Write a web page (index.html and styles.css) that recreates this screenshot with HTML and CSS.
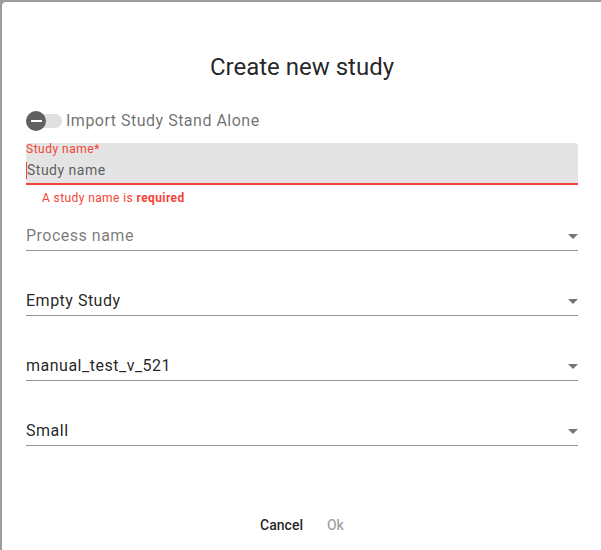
FILE: index.html
```html
<!DOCTYPE html>
<html>
<head>
<meta charset="utf-8">
<link rel="stylesheet" href="styles.css">
</head>
<body>
<div class="dialog">
  <h2 class="title">Create new study</h2>

  <label class="toggle">
    <span class="track"><span class="thumb"><span class="minus"></span></span></span>
    <span class="toggle-label">Import Study Stand Alone</span>
  </label>

  <div class="filled invalid">
    <div class="f-label">Study name*</div>
    <div class="f-input"><span class="caret"></span>Study name</div>
  </div>
  <div class="error">A study name is <b>required</b></div>

  <div class="selects">
    <div class="select placeholder"><span>Process name</span><span class="arrow"></span></div>
    <div class="select"><span>Empty Study</span><span class="arrow"></span></div>
    <div class="select"><span>manual_test_v_521</span><span class="arrow"></span></div>
    <div class="select"><span>Small</span><span class="arrow"></span></div>
  </div>

  <div class="actions">
    <button class="btn">Cancel</button>
    <button class="btn disabled">Ok</button>
  </div>
</div>
</body>
</html>
```
FILE: styles.css
```css
html, body {
  margin: 0;
  padding: 0;
  background: #9c9c9c;
  height: 550px;
  overflow: hidden;
}
body {
  font-family: Roboto, "Liberation Sans", sans-serif;
}
.dialog {
  margin: 2px 0 0 2px;
  width: 600px;
  height: 560px;
  background: #fff;
  border-radius: 4px 0 0 0;
  padding: 50px 24px 0 24px;
  box-sizing: border-box;
}
.title {
  margin: 0;
  font-size: 24px;
  line-height: 30px;
  font-weight: 400;
  text-align: center;
  color: rgba(0, 0, 0, 0.87);
}
.toggle {
  display: flex;
  align-items: center;
  height: 20px;
  margin-top: 29px;
  gap: 4px;
}
.track {
  position: relative;
  width: 36px;
  height: 14px;
  border-radius: 7px;
  background: #e0e0e0;
  flex: none;
}
.thumb {
  position: absolute;
  left: 0;
  top: -3px;
  width: 20px;
  height: 20px;
  border-radius: 50%;
  background: #616161;
  display: flex;
  align-items: center;
  justify-content: center;
}
.minus {
  width: 11px;
  height: 2px;
  background: #fff;
}
.toggle-label {
  font-size: 16px;
  letter-spacing: 0.5px;
  color: rgba(0, 0, 0, 0.58);
  line-height: 20px;
}
.filled {
  margin-top: 12px;
  background: #e4e4e4;
  border-bottom: 2px solid #f44336;
  padding-bottom: 3px;
  border-radius: 3px 3px 0 0;
}
.f-label {
  font-size: 12px;
  line-height: 12px;
  letter-spacing: 0.5px;
  color: #f44336;
}
.f-input {
  margin-top: 5px;
  font-size: 14px;
  letter-spacing: 0.5px;
  line-height: 20px;
  color: rgba(0, 0, 0, 0.62);
  display: flex;
  align-items: center;
}
.caret {
  width: 1px;
  height: 17px;
  background: #f44336;
}
.error {
  margin-top: 6px;
  padding-left: 16px;
  font-size: 12px;
  letter-spacing: 0.4px;
  line-height: 14px;
  color: #f44336;
}
.error b {
  font-weight: 700;
}
.selects {
  margin-top: 20px;
  display: flex;
  flex-direction: column;
  gap: 39px;
}
.select {
  display: flex;
  justify-content: space-between;
  align-items: center;
  font-size: 16px;
  letter-spacing: 0.5px;
  line-height: 20px;
  padding-top: 1px;
  padding-bottom: 4px;
  border-bottom: 1px solid #949494;
  color: rgba(0, 0, 0, 0.87);
}
.select.placeholder {
  color: rgba(0, 0, 0, 0.54);
}
.arrow {
  width: 0;
  height: 0;
  border-left: 5px solid transparent;
  border-right: 5px solid transparent;
  border-top: 5px solid #757575;
}
.actions {
  margin-top: 61px;
  display: flex;
  justify-content: center;
  gap: 8px;
}
.btn {
  font-family: Roboto, "Liberation Sans", sans-serif;
  font-size: 14px;
  font-weight: 500;
  height: 36px;
  padding: 0 8px;
  border: none;
  background: transparent;
  color: rgba(0, 0, 0, 0.87);
}
.btn.disabled {
  color: rgba(0, 0, 0, 0.38);
}
```
